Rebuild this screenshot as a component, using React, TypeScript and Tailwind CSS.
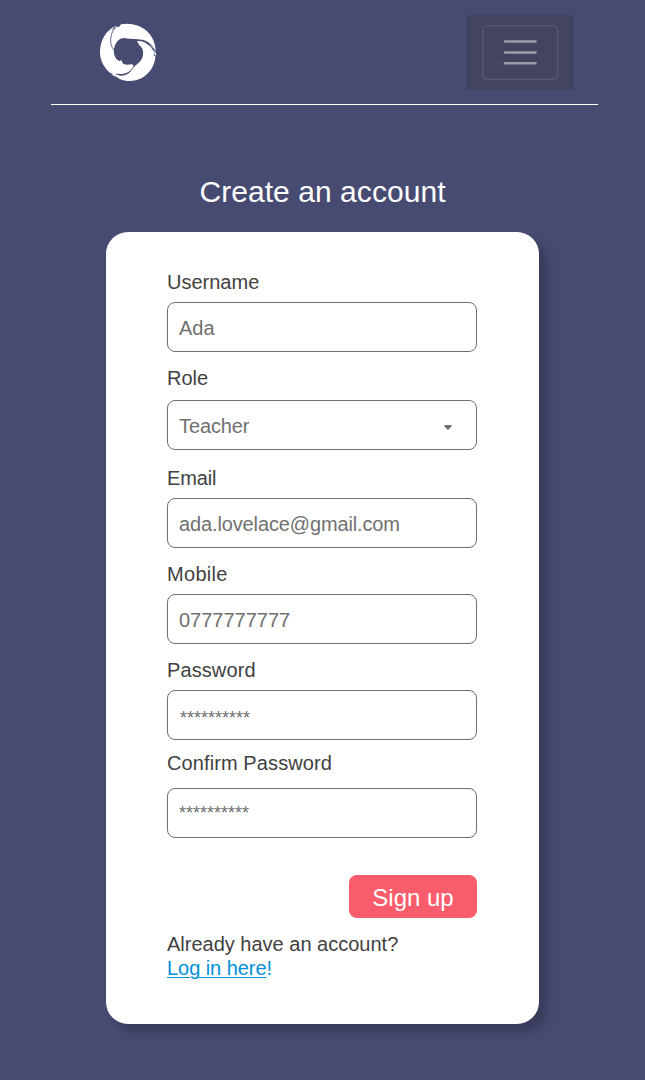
import React from "react";

type FieldProps = {
  label: string;
  value: string;
  labelClass: string;
  spacingClass?: string;
  textClass: string;
  caret?: boolean;
  inputGap: string;
};

function Logo() {
  return (
    <svg className="h-[76px] w-[76px]" viewBox="0 0 228 228" fill="none" aria-label="Logo">
      <path
        d="M93 28 C126 22 157 32 178 56 C192 73 199 95 197 120 C194 166 162 197 119 198 C97 198 84 190 68 180 C45 164 30 140 30 112 C30 78 47 45 78 33 L86 37 Z"
        fill="#fff"
      />
      <path
        d="M71 104 L75 91 L82 79 L90 72 L100 69 L118 71 L136 72 L158 74 C176 79 188 90 198 111 L194 113 L186 101 C178 91 168 83 155 79 L141 78 L148 91 C157 97 161 107 159 121 C157 134 151 140 141 148 C133 154 129 161 121 170 C112 179 102 182 91 182 L74 177 L80 176 L98 177 C113 174 126 165 131 152 L127 148 L110 149 L99 146 L94 136 L87 138 L79 132 L73 121 Z"
        fill="#474b72"
      />
      <path d="M84 30 L75 39 C66 49 64 59 62 72 C61 86 64 95 71 104" stroke="#474b72" strokeWidth="2.5" />
      <path d="M74 36 L67 46 M60 177 L68 174 M65 184 L75 183 L83 188 M190 119 L200 126 M198 105 L194 118" stroke="#474b72" strokeWidth="2.5" />
      <path d="M66 174 L73 174 M70 181 L83 185 M180 91 L188 99 M193 107 L198 119" stroke="#fff" strokeWidth="2" strokeLinecap="round" />
    </svg>
  );
}

function Field({ label, value, labelClass, spacingClass = "", textClass, caret, inputGap }: FieldProps) {
  return (
    <div className={labelClass}>
      <div className={`${spacingClass} text-xl leading-6 text-[#414141]`}>{label}</div>
      <div
        className={`${inputGap} flex h-[50px] items-center justify-between rounded-[8px] border border-[#707070] pl-[11px] pr-[24px] text-[#707070]`}
      >
        <span className={textClass}>{value}</span>
        {caret && (
          <svg className="mt-[4px] h-[5px] w-[8px]" viewBox="0 0 8 5" fill="#707070">
            <path d="M1 0 H7 Q8 .2 7.5 1.2 L4.7 4.4 Q4 5 3.3 4.4 L.5 1.2 Q0 .2 1 0Z" />
          </svg>
        )}
      </div>
    </div>
  );
}

export default function App() {
  return (
    <div className="flex h-[1080px] w-[645px] flex-col overflow-hidden bg-[#474b72] font-['Liberation_Sans',Arial,sans-serif]">
      <header className="ml-[51px] flex h-[105px] w-[547px] justify-between border-b border-white pl-[39px] pr-[24px] pt-[15px]">
        <Logo />
        <div className="flex h-[75px] w-[108px] items-center justify-center bg-[#424461]">
          <button className="flex h-[55px] w-[77px] items-center justify-center">
            <svg className="h-[55px] w-[77px]" viewBox="0 0 77 55" fill="none">
              <rect x=".75" y=".75" width="75" height="53.5" rx="5" stroke="#52546f" strokeWidth="1.8" />
              <path d="M23 16.5 H53.5 M23 27.5 H53.5 M23 38.3 H53.5" stroke="#9c9cac" strokeWidth="2.6" strokeLinecap="round" />
            </svg>
          </button>
        </div>
      </header>

      <h1 className="mt-[69px] h-[36px] whitespace-nowrap text-center text-[30px] leading-[36px] tracking-[0.06px] text-white">
        Create an account
      </h1>

      <main className="ml-[106px] mt-[22px] h-[792px] w-[433px] rounded-[22px] bg-white pl-[61px] pr-[62px] pt-[38px] shadow-[8px_8px_10px_rgba(0,0,0,0.22)]">
        <Field label="Username" value="Ada" labelClass="" inputGap="mt-[8px]" textClass="pt-[2px] text-xl leading-6" />
        <Field label="Role" value="Teacher" labelClass="mt-[14px]" inputGap="mt-[10px]" textClass="pt-[2px] text-xl leading-6 tracking-[-0.12px]" caret />
        <Field label="Email" value="ada.lovelace@gmail.com" labelClass="mt-[16px]" spacingClass="tracking-[-0.15px]" inputGap="mt-[8px]" textClass="pt-[2px] text-xl leading-6 tracking-[-0.13px]" />
        <Field label="Mobile" value="0777777777" labelClass="mt-[14px]" spacingClass="tracking-[0.3px]" inputGap="mt-[8px]" textClass="pt-[2px] text-xl leading-6" />
        <Field label="Password" value="**********" labelClass="mt-[14px]" spacingClass="tracking-[0.1px]" inputGap="mt-[8px]" textClass="pl-px pt-[6px] text-lg leading-6" />
        <Field label="Confirm Password" value="**********" labelClass="mt-[11px]" spacingClass="tracking-[0.1px]" inputGap="mt-[13px]" textClass="text-lg leading-6" />

        <button className="ml-auto mt-[37px] flex h-[43px] w-[128px] items-center justify-center rounded-[8px] bg-[#f95c6b] pt-[2px] text-2xl text-white">
          Sign up
        </button>

        <p className="mt-[14px] whitespace-nowrap text-xl leading-6 text-[#414141]">Already have an account?</p>
        <p className="text-xl leading-6 tracking-[-0.05px] text-[#0090d9]">
          <a className="underline decoration-1 underline-offset-2">Log in here</a>!
        </p>
      </main>
    </div>
  );
}
